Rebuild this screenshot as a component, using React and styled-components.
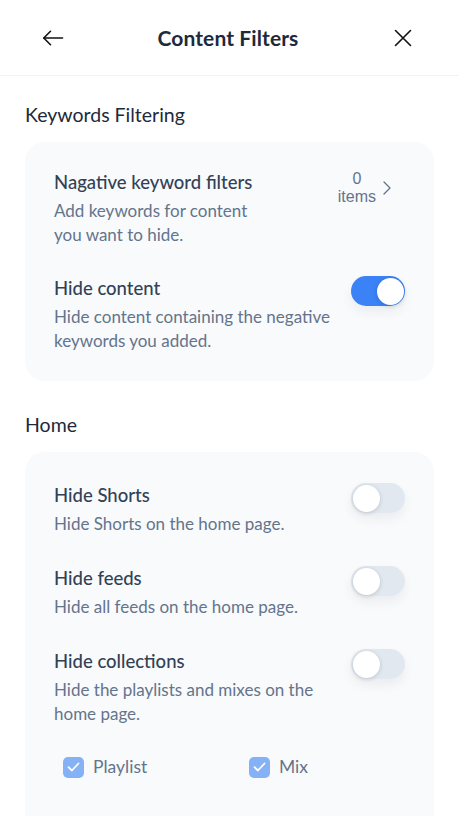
import React, { useState } from 'react';
import styled, { createGlobalStyle } from 'styled-components';

const GlobalStyle = createGlobalStyle`
  html, body {
    margin: 0;
    padding: 0;
    background: #ffffff;
  }
  body {
    font-family: Lato, "Noto Sans", sans-serif;
    -webkit-font-smoothing: antialiased;
  }
  * {
    box-sizing: border-box;
  }
`;

const Page = styled.div`
  width: 459px;
  min-height: 816px;
  background: #ffffff;
  display: flex;
  flex-direction: column;
`;

const Header = styled.header`
  height: 76px;
  display: flex;
  align-items: center;
  justify-content: space-between;
  padding: 0 43px 0 40px;
  border-bottom: 1px solid #f1f3f6;
`;

const IconBtn = styled.button`
  width: 26px;
  height: 26px;
  padding: 0;
  border: none;
  background: none;
  display: flex;
  align-items: center;
  justify-content: center;
  cursor: pointer;
  color: #111111;
`;

const Title = styled.h1`
  margin: 0;
  font-size: 21px;
  font-weight: 700;
  color: #1e293b;
  letter-spacing: 0.1px;
`;

const Body = styled.main`
  padding: 27px 25px 0;
  display: flex;
  flex-direction: column;
`;

const SectionTitle = styled.h2`
  margin: 0 0 15px;
  font-size: 19.5px;
  line-height: 24px;
  font-weight: 400;
  color: #1e293b;
`;

const Card = styled.section`
  background: #f8fafc;
  border-radius: 20px;
  padding: ${(p) => (p.$open ? '31px 29px 40px' : '28px 29px 28px')};
  margin-bottom: 32px;
  display: flex;
  flex-direction: column;
  gap: ${(p) => (p.$open ? '30px' : '29px')};
  ${(p) => p.$open && 'margin-bottom: 0; border-radius: 20px 20px 0 0;'}
`;

const Row = styled.div`
  display: flex;
  align-items: flex-start;
  justify-content: space-between;
  gap: 14px;
`;

const Text = styled.div`
  flex: 1;
  min-width: 0;
`;

const RowTitle = styled.div`
  font-size: 18.5px;
  line-height: 24px;
  font-weight: 500;
  color: #334155;
`;

const RowDesc = styled.div`
  margin-top: 5px;
  font-size: 17px;
  line-height: 24px;
  color: #64748b;
  max-width: ${(p) => p.$max || 'none'};
`;

const Meta = styled.button`
  border: none;
  background: none;
  padding: 0;
  margin-right: 14px;
  display: flex;
  align-items: center;
  gap: 7px;
  color: #64748b;
  cursor: pointer;
`;

const Count = styled.span`
  font-family: "Liberation Sans", Arial, sans-serif;
  font-size: 16px;
  line-height: 18px;
  text-align: center;
  display: flex;
  flex-direction: column;
`;

const Track = styled.button`
  flex: none;
  width: 54px;
  height: 30px;
  padding: 0;
  border: none;
  border-radius: 15px;
  background: ${(p) => (p.$on ? '#3b82f6' : '#e2e8f0')};
  position: relative;
  cursor: pointer;
  box-shadow: 0 6px 12px rgba(15, 23, 42, 0.06);
`;

const Knob = styled.span`
  position: absolute;
  top: 1.5px;
  left: ${(p) => (p.$on ? '25.5px' : '1.5px')};
  width: 27px;
  height: 27px;
  border-radius: 50%;
  background: #ffffff;
  box-shadow: 0 1px 4px rgba(15, 23, 42, 0.18);
  transition: left 0.15s ease;
`;

const Checks = styled.div`
  display: grid;
  grid-template-columns: 186px 1fr;
  padding-left: 9px;
`;

const CheckLabel = styled.label`
  display: flex;
  align-items: center;
  gap: 9px;
  font-size: 17.5px;
  line-height: 22px;
  color: #64748b;
  cursor: pointer;
`;

const Box = styled.span`
  width: 21px;
  height: 21px;
  border-radius: 5px;
  background: ${(p) => (p.$checked ? '#85b1f7' : '#ffffff')};
  border: ${(p) => (p.$checked ? 'none' : '1px solid #cbd5e1')};
  display: flex;
  align-items: center;
  justify-content: center;
`;

const ArrowLeft = () => (
  <svg width="22" height="22" viewBox="0 0 22 22" fill="none" stroke="currentColor" strokeWidth="1.6" strokeLinecap="round" strokeLinejoin="round">
    <path d="M20.5 11H1.8" />
    <path d="M8.5 4.3L1.8 11l6.7 6.7" />
  </svg>
);

const Close = () => (
  <svg width="18" height="18" viewBox="0 0 18 18" fill="none" stroke="currentColor" strokeWidth="1.6" strokeLinecap="round">
    <path d="M1.5 1.5l15 15M16.5 1.5l-15 15" />
  </svg>
);

const Chevron = () => (
  <svg width="8" height="14" viewBox="0 0 8 14" fill="none" stroke="currentColor" strokeWidth="1.3" strokeLinecap="round" strokeLinejoin="round">
    <path d="M1 1l6 6-6 6" />
  </svg>
);

const Tick = () => (
  <svg width="13" height="10" viewBox="0 0 13 10" fill="none" stroke="#ffffff" strokeWidth="1.8" strokeLinecap="round" strokeLinejoin="round">
    <path d="M1.5 5.2l3.4 3.3L11.5 1.5" />
  </svg>
);

const Toggle = ({ on, onChange }) => (
  <Track $on={on} onClick={() => onChange(!on)} aria-pressed={on}>
    <Knob $on={on} />
  </Track>
);

const Check = ({ label, checked, onChange }) => (
  <CheckLabel onClick={() => onChange(!checked)}>
    <Box $checked={checked}>{checked && <Tick />}</Box>
    {label}
  </CheckLabel>
);

const homeRows = [
  { key: 'shorts', title: 'Hide Shorts', desc: 'Hide Shorts on the home page.' },
  { key: 'feeds', title: 'Hide feeds', desc: 'Hide all feeds on the home page.' },
  { key: 'collections', title: 'Hide collections', desc: 'Hide the playlists and mixes on the home page.' },
];

const App = () => {
  const [hideContent, setHideContent] = useState(true);
  const [home, setHome] = useState({ shorts: false, feeds: false, collections: false });
  const [playlist, setPlaylist] = useState(true);
  const [mix, setMix] = useState(true);

  return (
    <Page>
      <GlobalStyle />
      <Header>
        <IconBtn aria-label="Back"><ArrowLeft /></IconBtn>
        <Title>Content Filters</Title>
        <IconBtn aria-label="Close"><Close /></IconBtn>
      </Header>

      <Body>
        <SectionTitle>Keywords Filtering</SectionTitle>
        <Card>
          <Row>
            <Text>
              <RowTitle>Nagative keyword filters</RowTitle>
              <RowDesc $max="220px">Add keywords for content you want to hide.</RowDesc>
            </Text>
            <Meta>
              <Count><span>0</span><span>items</span></Count>
              <Chevron />
            </Meta>
          </Row>
          <Row>
            <Text>
              <RowTitle>Hide content</RowTitle>
              <RowDesc>Hide content containing the negative keywords you added.</RowDesc>
            </Text>
            <Toggle on={hideContent} onChange={setHideContent} />
          </Row>
        </Card>

        <SectionTitle>Home</SectionTitle>
        <Card $open>
          {homeRows.map((r) => (
            <Row key={r.key}>
              <Text>
                <RowTitle>{r.title}</RowTitle>
                <RowDesc>{r.desc}</RowDesc>
              </Text>
              <Toggle on={home[r.key]} onChange={(v) => setHome({ ...home, [r.key]: v })} />
            </Row>
          ))}
          <Checks>
            <Check label="Playlist" checked={playlist} onChange={setPlaylist} />
            <Check label="Mix" checked={mix} onChange={setMix} />
          </Checks>
        </Card>
      </Body>
    </Page>
  );
};

export default App;
